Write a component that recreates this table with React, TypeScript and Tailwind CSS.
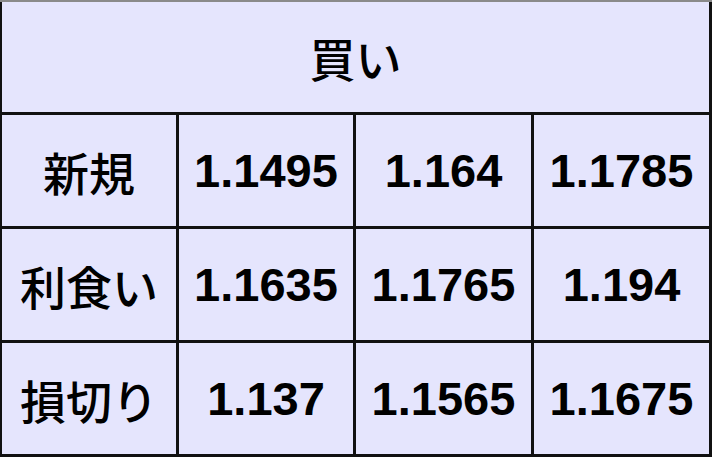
import React from "react";

const rows: { label: string; vals: string[] }[] = [
  { label: "新規", vals: ["1.1495", "1.164", "1.1785"] },
  { label: "利食い", vals: ["1.1635", "1.1765", "1.194"] },
  { label: "損切り", vals: ["1.137", "1.1565", "1.1675"] },
];

export default function App() {
  return (
    <div className="w-[712px] h-[457px] bg-[#111] border-t-[2px] border-t-[#8a8a8a] pl-[2px] pr-[3px] pb-[3px] flex flex-col gap-[3px] overflow-hidden">
      <div className="h-[110px] bg-[#e5e5fd] flex items-center justify-center text-[46px] font-medium text-black leading-none font-['Noto_Sans_CJK_JP','Liberation_Sans',sans-serif]">
        買い
      </div>
      {rows.map((r) => (
        <div
          key={r.label}
          className="h-[111px] grid grid-cols-[174px_174px_175px_175px] gap-[3px]"
        >
          <div className="bg-[#e5e5fd] flex items-center justify-center text-[46px] font-medium text-black leading-none font-['Noto_Sans_CJK_JP','Liberation_Sans',sans-serif]">
            {r.label}
          </div>
          {r.vals.map((v, i) => (
            <div
              key={i}
              className="bg-[#e5e5fd] flex items-center justify-center text-[47px] font-bold text-black leading-none font-['Liberation_Sans',Arial,sans-serif]"
            >
              {v}
            </div>
          ))}
        </div>
      ))}
    </div>
  );
}
